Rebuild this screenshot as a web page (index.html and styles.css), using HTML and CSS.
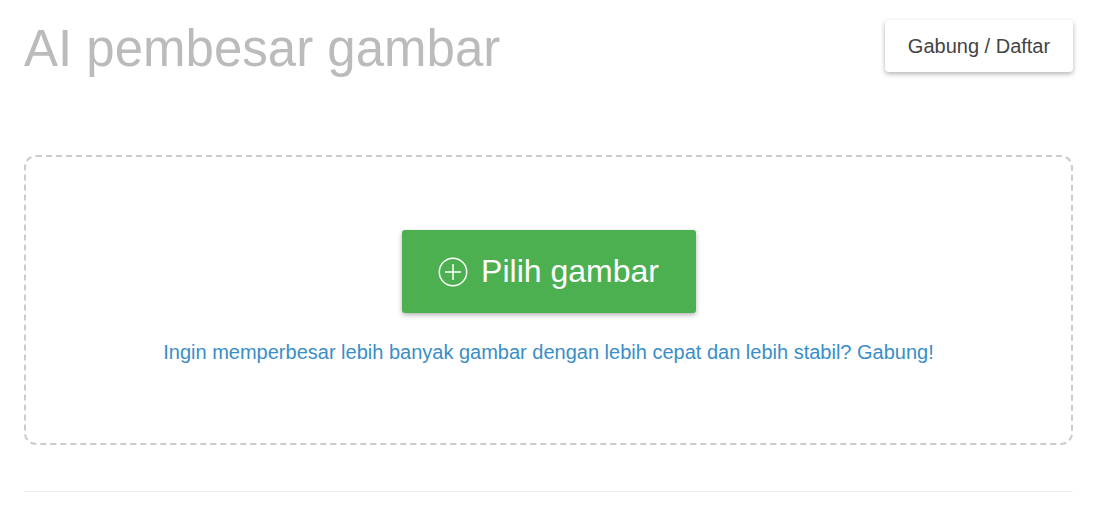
FILE: index.html
```html
<!DOCTYPE html>
<html lang="id">
<head>
    <meta charset="UTF-8">
    <meta name="viewport" content="width=device-width, initial-scale=1.0">
    <title>AI pembesar gambar</title>
    <link rel="stylesheet" href="styles.css">
</head>
<body>
    <div class="page">
        <div class="header">
            <h1 class="title">AI pembesar gambar</h1>
            <button class="join-btn">Gabung / Daftar</button>
        </div>
        <div class="dropzone">
            <button class="pick-btn">
                <svg class="plus-icon" width="30" height="30" viewBox="0 0 30 30">
                    <circle cx="15" cy="15" r="13.7" fill="none" stroke="#fff" stroke-width="1.5"/>
                    <path d="M15 7 V23 M7 15 H23" stroke="#fff" stroke-width="1.5"/>
                </svg>
                <span>Pilih gambar</span>
            </button>
            <a class="more-link" href="#">Ingin memperbesar lebih banyak gambar dengan lebih cepat dan lebih stabil? Gabung!</a>
        </div>
        <div class="divider"></div>
    </div>
</body>
</html>
```

FILE: styles.css
```css
body
{
    margin: 0;
    background-color: #fff;
    font-family: "Liberation Sans", Arial, sans-serif;
}
.page
{
    margin: 0 20px 0 24px;
}
.header
{
    display: flex;
    justify-content: space-between;
    align-items: flex-start;
    height: 155px;
}
.title
{
    margin: 19px 0 0 0;
    font-size: 51px;
    font-weight: normal;
    line-height: 60px;
    color: #bbb;
}
.join-btn
{
    margin-top: 20px;
    width: 188px;
    height: 52px;
    border: none;
    border-radius: 4px;
    background-color: #fff;
    box-shadow: 0 2px 5px rgba(0,0,0,0.3);
    font-family: "Liberation Sans", Arial, sans-serif;
    font-size: 20px;
    color: #444;
}
.dropzone
{
    height: 286px;
    border: 2px dashed #ccc;
    border-radius: 12px;
    display: flex;
    flex-direction: column;
    align-items: center;
}
.pick-btn
{
    margin-top: 73px;
    width: 294px;
    height: 83px;
    border: none;
    border-radius: 3px;
    background-color: #4caf50;
    box-shadow: 0 2px 5px rgba(0,0,0,0.3);
    color: #fff;
    font-family: "Liberation Sans", Arial, sans-serif;
    font-size: 32px;
    display: flex;
    align-items: center;
    justify-content: center;
    gap: 13px;
}
.plus-icon
{
    display: block;
}
.more-link
{
    margin-top: 28px;
    font-size: 20px;
    color: #3a8ec8;
    text-decoration: none;
}
.divider
{
    margin-top: 46px;
    height: 1px;
    background-color: #eee;
}
```
